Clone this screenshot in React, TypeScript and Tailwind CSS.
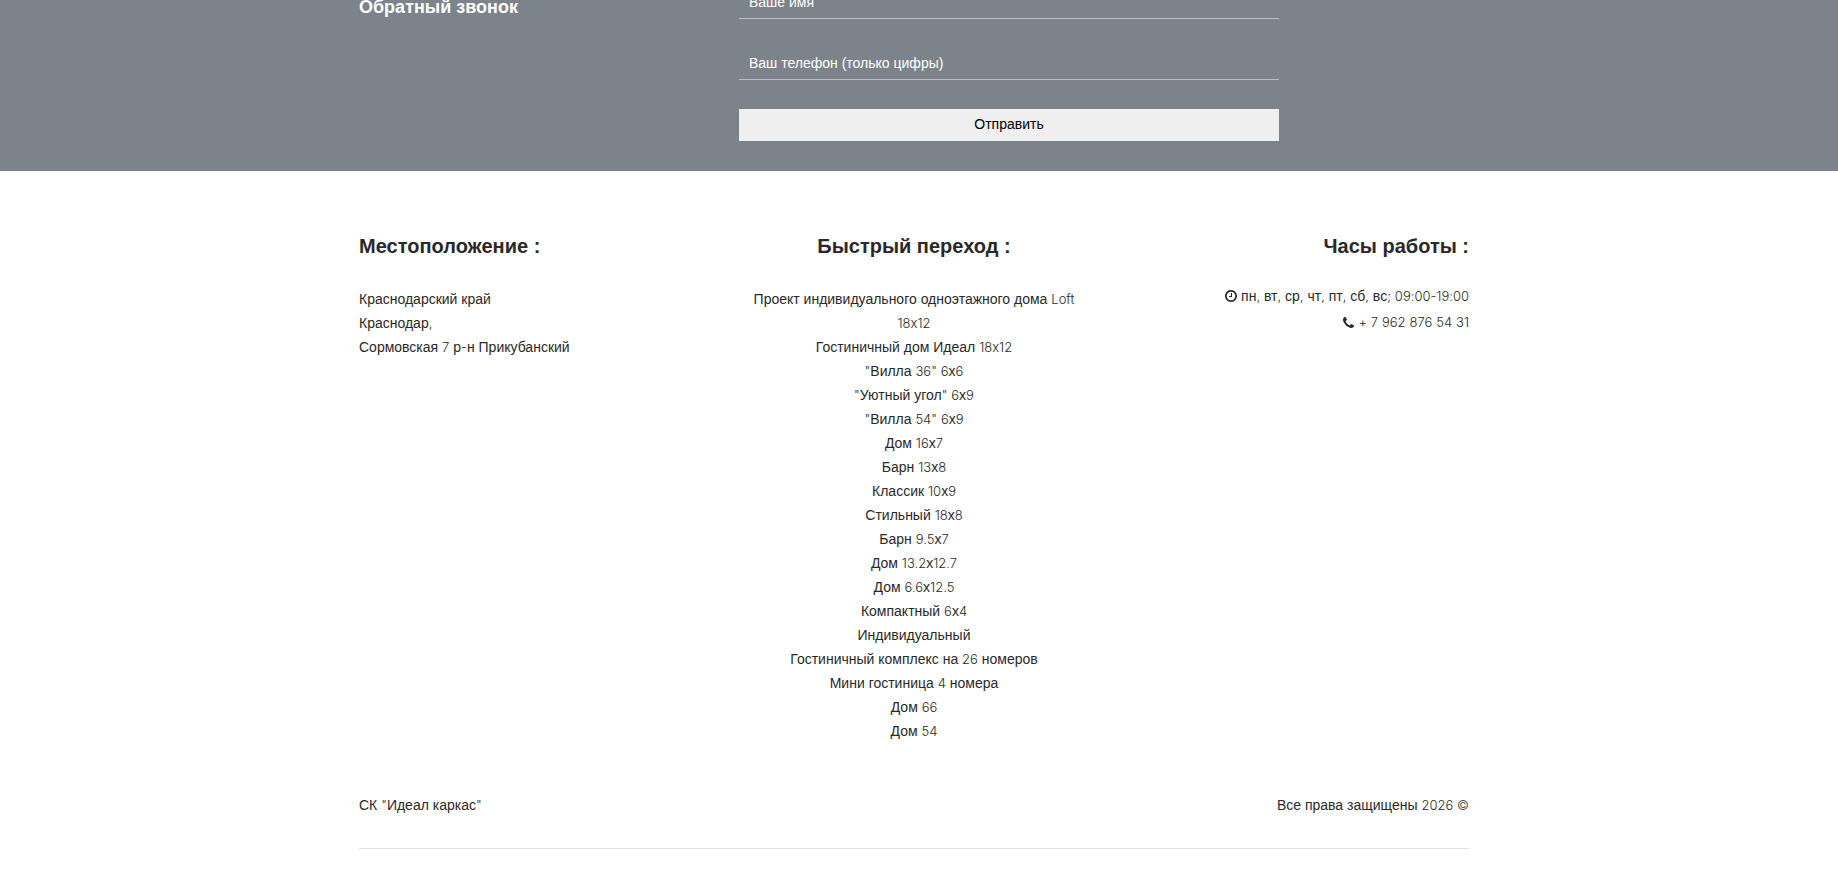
const projects = [
  'Проект индивидуального одноэтажного дома Loft 18x12',
  'Гостиничный дом Идеал 18x12',
  '"Вилла 36" 6х6',
  '"Уютный угол" 6х9',
  '"Вилла 54" 6х9',
  'Дом 16х7',
  'Барн 13х8',
  'Классик 10х9',
  'Стильный 18х8',
  'Барн 9.5х7',
  'Дом 13.2х12.7',
  'Дом 6.6х12.5',
  'Компактный 6х4',
  'Индивидуальный',
  'Гостиничный комплекс на 26 номеров',
  'Мини гостиница 4 номера',
  'Дом 66',
  'Дом 54',
]

// Latin letters and digits are set in a lighter face than the Cyrillic text
function Mixed({ text }: { text: string }) {
  return text.split(/([A-Za-z0-9.,;:+\-©"]+)/).map((part, i) =>
    i % 2 ? (
      <span key={i} className="font-['Inter','Open_Sans',sans-serif] text-[13px] font-light [font-variant-ligatures:none]">
        {part}
      </span>
    ) : (
      part
    ),
  )
}

function ClockIcon() {
  return (
    <svg viewBox="128 128 1536 1536" className="size-3" fill="currentColor" aria-hidden="true">
      <path d="M1024 544v448q0 14-9 23t-23 9h-320q-14 0-23-9t-9-23v-64q0-14 9-23t23-9h224v-352q0-14 9-23t23-9h64q14 0 23 9t9 23zm416 352q0-148-73-273t-198-198-273-73-273 73-198 198-73 273 73 273 198 198 273 73 273-73 198-198 73-273zm224 0q0 209-103 385.5t-279.5 279.5-385.5 103-385.5-103-279.5-279.5-103-385.5 103-385.5 279.5-279.5 385.5-103 385.5 103 279.5 279.5 103 385.5z" />
    </svg>
  )
}

function PhoneIcon() {
  return (
    <svg viewBox="192 128 1408 1408" className="size-[11px]" fill="currentColor" aria-hidden="true">
      <path d="M1600 1240q0 27-10 70.5t-21 68.5q-21 50-122 106-94 51-186 51-27 0-53-3.5t-57-12.5-47-14.5-55.5-20.5-49.5-18q-98-35-175-83-127-79-264-216t-216-264q-48-77-83-175-3-9-18-49.5t-20.5-55.5-14.5-47-12.5-57-3.5-53q0-92 51-186 56-101 106-122 25-11 68.5-21t70.5-10q14 0 21 3 18 6 53 76 11 19 30 54t35 63.5 31 53.5q3 4 17.5 25t21.5 35.5 7 28.5q0 20-28.5 50t-62 55-62 53-28.5 46q0 9 5 22.5t8.5 20.5 14 24 11.5 19q76 137 174 235t235 174q2 1 19 11.5t24 14 20.5 8.5 22.5 5q18 0 46-28.5t53-62 55-62 50-28.5q14 0 28.5 7t35.5 21.5 25 17.5q25 15 53.5 31t63.5 35 54 30q70 35 76 53 3 7 3 21z" />
    </svg>
  )
}

function Callback() {
  const field =
    'block h-9 w-full border-b border-[#b9bdc6] bg-transparent px-2.5 pt-0.5 text-sm text-white outline-none placeholder:text-white placeholder:opacity-100'

  return (
    <section className="overflow-hidden bg-[#7d838b] pr-2.5 pb-[30px]">
      <div className="mx-auto -mt-[17px] grid max-w-[1140px] grid-cols-3 px-[15px]">
        <h3 className="mt-3 text-lg leading-6 font-bold text-white">Обратный звонок</h3>
        <form className="col-span-2 ml-2.5 flex w-full max-w-[540px] flex-col">
          <input className={field} type="text" placeholder="Ваше имя" aria-label="Ваше имя" />
          <input
            className={`${field} mt-[25px]`}
            type="tel"
            placeholder="Ваш телефон (только цифры)"
            aria-label="Ваш телефон (только цифры)"
          />
          <button type="button" className="mt-[29px] h-8 bg-[#efefef] pb-0.5 text-sm text-black">
            Отправить
          </button>
        </form>
      </div>
    </section>
  )
}

function Footer() {
  return (
    <footer className="pr-2.5">
      <div className="mx-auto max-w-[1140px] px-[15px] pt-[60px] text-sm leading-6 text-[#292929]">
        <div className="grid grid-cols-3 gap-[30px]">
          <div>
            <h4 className="text-xl leading-[30px] font-bold">Местоположение :</h4>
            <address className="mt-[26px] not-italic">
              Краснодарский край
              <br />
              <Mixed text="Краснодар," />
              <br />
              <Mixed text="Сормовская 7 р-н Прикубанский" />
            </address>
          </div>
          <div className="text-center">
            <h4 className="text-xl leading-[30px] font-bold">Быстрый переход :</h4>
            <ul className="mt-[26px]">
              {projects.map((name) => (
                <li key={name}>
                  <a href="#">
                    <Mixed text={name} />
                  </a>
                </li>
              ))}
            </ul>
          </div>
          <div className="text-right">
            <h4 className="text-xl leading-[30px] font-bold">Часы работы :</h4>
            <div className="mt-[22px] leading-[26px]">
              <p className="flex items-center justify-end gap-1">
                <ClockIcon />
                <span>
                  <Mixed text="пн, вт, ср, чт, пт, сб, вс; 09:00-19:00" />
                </span>
              </p>
              <a href="tel:+79628765431" className="flex items-center justify-end gap-1">
                <PhoneIcon />
                <span>
                  <Mixed text="+ 7 962 876 54 31" />
                </span>
              </a>
            </div>
          </div>
        </div>
        <div className="mt-[50px] flex justify-between border-b border-[#dfe0e1] pb-[31px]">
          <p>
            <Mixed text={'СК "Идеал каркас"'} />
          </p>
          <p>
            <Mixed text="Все права защищены 2026 ©" />
          </p>
        </div>
      </div>
    </footer>
  )
}

export default function App() {
  return (
    <div className="min-h-screen bg-white font-['Liberation_Sans',Arial,sans-serif]">
      <Callback />
      <Footer />
    </div>
  )
}
